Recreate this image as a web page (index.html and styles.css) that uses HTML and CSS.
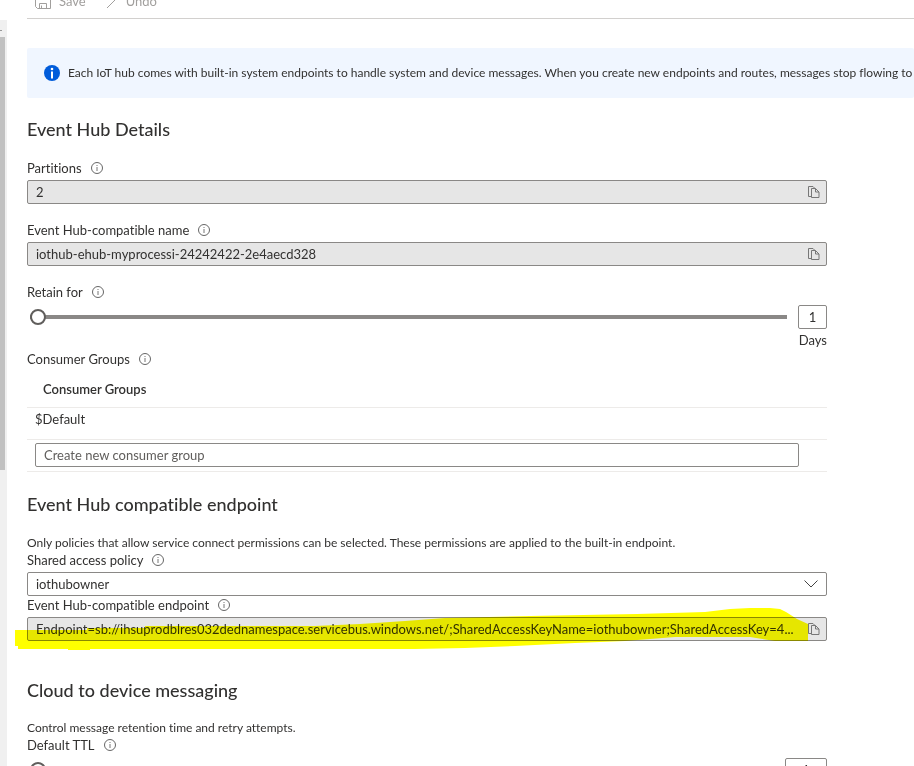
FILE: index.html
```html
<!DOCTYPE html>
<html lang="en">
<head>
  <meta charset="UTF-8">
  <title>Built-in endpoints</title>
  <link rel="stylesheet" href="styles.css">
</head>
<body>

  <svg class="sprite" aria-hidden="true">
    <symbol id="icon-info" viewBox="0 0 12 12">
      <circle cx="6" cy="6" r="5.5" fill="none" stroke="#666" />
      <path d="M6 5v4M6 3v1" stroke="#777" />
    </symbol>
    <symbol id="icon-copy" viewBox="0 0 12 12">
      <path d="M3.5 10.500h-3v-10h4.500l1.500 1.500M3.500 2.500h4l3.500 3.500v5.500h-7.500zM7.500 2.500v3.500h3.500" fill="none" stroke="#777" />
    </symbol>
  </svg>

  <div class="page">
    <div class="scrollbar">
      <span class="scroll-up"></span>
      <span class="scroll-thumb"></span>
    </div>

    <main class="content">
      <div class="toolbar">
        <button type="button" disabled>
          <svg width="16" height="16" viewBox="0 0 16 16" fill="none" stroke="#a19f9d"><path d="M.5.5h15v15H2.500l-2-2zM3.500.5v6h9v-6M4.500 15.500v-5h7v5M6.500 12.500v3" /></svg>
          Save
        </button>
        <button type="button" disabled>
          <svg width="12" height="16" viewBox="0 0 12 16" fill="none" stroke="#a19f9d"><path d="M1 15L11 5M11 5L6 1" /></svg>
          Undo
        </button>
      </div>

      <div class="banner">
        <svg width="16" height="16" viewBox="0 0 16 16"><circle cx="8" cy="8" r="8" fill="#015cda" /><path d="M8 6.500v7" stroke="#fff" stroke-width="2" /><circle cx="8" cy="4" r="1.300" fill="#fff" /></svg>
        <span>Each IoT hub comes with built-in system endpoints to handle system and device messages. When you create new endpoints and routes, messages stop flowing to the built-in endpoint.</span>
      </div>

      <form class="settings">
        <section>
          <h2>Event Hub Details</h2>

          <div class="field">
            <div class="label"><label for="partitions">Partitions</label><svg class="info"><use href="#icon-info" /></svg></div>
            <div class="box readonly">
              <input type="text" id="partitions" value="2" readonly>
              <button type="button" class="copy" aria-label="Copy"><svg><use href="#icon-copy" /></svg></button>
            </div>
          </div>

          <div class="field">
            <div class="label"><label for="hub-name">Event Hub-compatible name</label><svg class="info"><use href="#icon-info" /></svg></div>
            <div class="box readonly">
              <input type="text" id="hub-name" value="iothub-ehub-myprocessi-24242422-2e4aecd328" readonly>
              <button type="button" class="copy" aria-label="Copy"><svg><use href="#icon-copy" /></svg></button>
            </div>
          </div>

          <div class="label"><label for="retain">Retain for</label><svg class="info"><use href="#icon-info" /></svg></div>
          <div class="slider">
            <input type="range" id="retain" min="1" max="7" value="1">
            <input type="text" class="amount" value="1" aria-label="Retain for, days">
          </div>
          <div class="unit">Days</div>

          <div class="label"><span>Consumer Groups</span><svg class="info"><use href="#icon-info" /></svg></div>
          <table>
            <thead>
              <tr><th>Consumer Groups</th></tr>
            </thead>
            <tbody>
              <tr><td>$Default</td></tr>
              <tr><td class="new-group"><input type="text" placeholder="Create new consumer group" aria-label="Create new consumer group"></td></tr>
            </tbody>
          </table>
        </section>

        <section class="compact">
          <h2>Event Hub compatible endpoint</h2>
          <p>Only policies that allow service connect permissions can be selected. These permissions are applied to the built-in endpoint.</p>

          <div class="label"><label for="policy">Shared access policy</label><svg class="info"><use href="#icon-info" /></svg></div>
          <div class="box">
            <select id="policy">
              <option>iothubowner</option>
            </select>
            <svg class="chevron" viewBox="0 0 14 8"><path d="M.5.5L7 7L13.500.5" fill="none" stroke="#444" /></svg>
          </div>

          <div class="label"><label for="endpoint">Event Hub-compatible endpoint</label><svg class="info"><use href="#icon-info" /></svg></div>
          <div class="box readonly">
            <input type="text" id="endpoint" value="Endpoint=sb://ihsuprodblres032dednamespace.servicebus.windows.net/;SharedAccessKeyName=iothubowner;SharedAccessKey=4..." readonly>
            <button type="button" class="copy" aria-label="Copy"><svg><use href="#icon-copy" /></svg></button>
            <svg class="marker" viewBox="0 0 800 44"><path d="M0 22H72V20H130V18H300L345 16L390 13L430 10L515 8L622 6L690 4L715 1L735 0H755L765 1L771 4L782 11L793 16V33H760L735 29L660 29L610 33L560 35L500 38L450 40L400 41H75V42H53V41H3V38H0Z" fill="#ff0" /></svg>
          </div>
        </section>

        <section class="compact">
          <h2>Cloud to device messaging</h2>
          <p>Control message retention time and retry attempts.</p>
          <div class="label"><label for="ttl">Default TTL</label><svg class="info"><use href="#icon-info" /></svg></div>
          <div class="slider">
            <input type="range" id="ttl" min="1" max="48" value="1">
            <input type="text" class="amount wide" value="1" aria-label="Default TTL, hours">
          </div>
        </section>
      </form>
    </main>
  </div>

</body>
</html>
```

FILE: styles.css
```css
* {
  box-sizing: border-box;
}

body {
  margin: 0;
  font-family: Lato, "Open Sans", sans-serif;
  font-size: 13px;
  font-variant-ligatures: none;
  line-height: 18px;
  color: #323130;
  background: #fff;
}

input, select, button {
  font: inherit;
  font-variant-ligatures: none;
  color: inherit;
}

.sprite {
  position: absolute;
  width: 0;
  height: 0;
}

.page {
  display: flex;
  height: 100vh;
  overflow: hidden;
}

/* list pane scrollbar */
.scrollbar {
  flex: 0 0 7px;
  margin-top: 20px;
  background: #f0f0f0;
}

.scroll-up {
  display: block;
  width: 2px;
  height: 17px;
  background: linear-gradient(#999, #999) 0 10px / 2px 1px no-repeat;
}

.scroll-thumb {
  display: block;
  width: 5px;
  height: 58%;
  background: #c1c1c1;
}

.content {
  flex: 1;
  min-width: 0;
  padding-left: 20px;
}

.toolbar {
  display: flex;
  gap: 20px;
  height: 34px;
  margin-top: -15px;
  padding: 7px 8px 0;
  border-bottom: 1px solid #d2d0ce;
}

.toolbar button {
  display: flex;
  align-items: center;
  gap: 8px;
  height: 18px;
  padding: 0;
  border: 0;
  background: none;
  color: #a19f9d;
}

.banner {
  display: flex;
  align-items: center;
  gap: 8px;
  height: 50px;
  margin-top: 29px;
  padding-left: 17px;
  border-radius: 2px;
  background: #f0f6ff;
  font-size: 12px;
  white-space: nowrap;
  overflow: hidden;
}

.banner svg {
  flex: none;
}

.settings {
  max-width: 800px;
  margin-right: 16px;
}

h2 {
  margin: 19px 0 18px;
  font-size: 18px;
  line-height: 24px;
  font-weight: 500;
}

p {
  margin: 0;
  font-size: 12px;
  line-height: 16px;
  white-space: nowrap;
}

.label {
  display: flex;
  align-items: center;
  gap: 9px;
  margin-bottom: 3px;
}

.info {
  width: 12px;
  height: 12px;
}

.field {
  margin-bottom: 17px;
}

.box {
  position: relative;
  display: flex;
  align-items: center;
  height: 24px;
  border: 1px solid #8a8886;
  border-radius: 2px;
}

.box input, .box select {
  flex: 1;
  min-width: 0;
  height: 22px;
  padding: 0 8px;
  border: 0;
  outline: 0;
  background: none;
  appearance: none;
}

.readonly {
  background: #e6e6e6;
}

.box.readonly input {
  padding-right: 0;
}

.copy {
  width: 24px;
  height: 22px;
  padding: 0 6px;
  border: 0;
  background: none;
}

.copy svg {
  display: block;
  width: 12px;
  height: 12px;
}

.chevron {
  position: absolute;
  right: 8px;
  width: 14px;
  height: 8px;
  pointer-events: none;
}

/* highlighter stroke over the connection string */
.marker {
  position: absolute;
  left: -13px;
  top: -10px;
  width: 800px;
  height: 44px;
  overflow: visible;
  mix-blend-mode: multiply;
  pointer-events: none;
}

.slider {
  display: flex;
  align-items: center;
  gap: 11px;
  height: 26px;
  padding-left: 3px;
}

.slider input[type="range"] {
  flex: 1;
  min-width: 0;
  height: 16px;
  margin: 0;
  appearance: none;
  border-radius: 2px;
  background: linear-gradient(#8a8886, #8a8886) center / 100% 4px no-repeat;
}

.slider input[type="range"]::-webkit-slider-thumb {
  appearance: none;
  width: 16px;
  height: 16px;
  border: 2px solid #605e5c;
  border-radius: 50%;
  background: #fff;
}

.amount {
  width: 29px;
  height: 24px;
  padding: 0;
  border: 1px solid #8a8886;
  border-radius: 2px;
  text-align: center;
}

.wide {
  width: 42px;
}

.unit {
  line-height: 20px;
  text-align: right;
}

table {
  width: 100%;
  border-collapse: collapse;
}

th, td {
  padding: 0 8px;
  border-bottom: 1px solid #edebe9;
  text-align: left;
}

th {
  height: 36px;
  padding-left: 16px;
  font-weight: 600;
}

td {
  height: 32px;
  padding-bottom: 8px;
}

.new-group {
  padding: 0 28px 0 8px;
}

.new-group input {
  display: block;
  width: 100%;
  height: 24px;
  padding: 0 8px;
  border: 1px solid #8a8886;
  border-radius: 2px;
}

.new-group input::placeholder {
  color: #605e5c;
}

.compact h2 {
  margin: 20px 0 19px;
}

.compact + .compact h2 {
  margin: 37px 0 18px;
}
```
